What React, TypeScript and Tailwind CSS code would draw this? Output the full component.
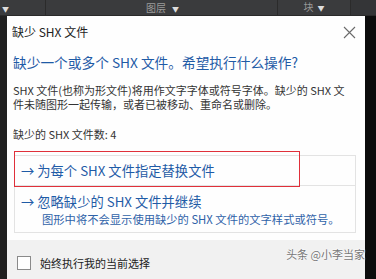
import React from "react";

const F = { fontFamily: '"Noto Sans CJK SC", "Noto Sans", sans-serif' };

export default function App() {
  return (
    <div className="w-[376px] h-[279px] overflow-hidden bg-[#141414] flex flex-col" style={F}>
      {/* top toolbar strip */}
      <div className="h-[16px] bg-[#3a3b3d] flex items-end text-[10px] text-[#9a9a9a] leading-none border-b border-[#2a2a2a]">
        <div className="w-[46px] h-full flex items-end pb-[2px] pl-[2px] border-r border-[#2b2b2b]">
          <span className="text-[7px] text-[#ddd]">▼</span>
        </div>
        <div className="w-[232px] h-full flex items-end justify-end pb-[2px] pr-[98px] border-r border-[#2b2b2b]">
          <span>图层</span>
          <span className="text-[7px] ml-[6px] text-[#ddd]">▼</span>
        </div>
        <div className="w-[73px] h-full flex items-end justify-center pb-[3px] border-r border-[#2b2b2b]">
          <span>块</span>
          <span className="text-[7px] ml-[4px] text-[#ddd]">▼</span>
        </div>
        <div className="flex-1 h-full bg-[#343537]" />
      </div>

      <div className="flex flex-1">
        <div className="w-[7px] bg-[#202020]" />
        <div className="w-[358px] bg-[#fefefe] flex flex-col">
          {/* title bar */}
          <div className="h-[30px] flex items-center justify-between pl-[5px] pr-[9px] pt-[1px]">
            <span className="text-[12px] leading-none text-[#222]">缺少 SHX 文件</span>
            <svg width="13" height="13" viewBox="0 0 13 13" className="mt-[1px]">
              <path d="M1 1L12 12M12 1L1 12" stroke="#6a6a6a" strokeWidth="1.1" fill="none" />
            </svg>
          </div>
          {/* content */}
          <div className="pl-[6px] pr-[6px]">
            <div className="mt-[6px] text-[13.7px] leading-[20px] text-[#1f5ba6] whitespace-nowrap">
              缺少一个或多个 SHX 文件。希望执行什么操作?
            </div>
            <div className="mt-[11px] text-[11px] leading-[14px] text-[#333] whitespace-nowrap">
              <div className="h-[14px]">SHX 文件(也称为形文件)将用作文字字体或符号字体。缺少的 SHX 文</div>
              <div className="h-[14px]">件未随图形一起传输，或者已被移动、重命名或删除。</div>
            </div>
            <div className="mt-[16px] text-[11px] leading-[14px] text-[#333]">缺少的 SHX 文件数: 4</div>

            <div className="relative mt-[14px] ml-[1px] w-[342px] border border-[#e3e3e3]">
              <div className="h-[30px] flex items-center pl-[6px] border-b border-[#e3e3e3] text-[13.3px] leading-none text-[#1f5ba6] whitespace-nowrap">
                → 为每个 SHX 文件指定替换文件
              </div>
              <div className="h-[46px] pl-[6px] pt-[6px]">
                <div className="text-[13.3px] leading-[20px] text-[#1f5ba6] whitespace-nowrap">→ 忽略缺少的 SHX 文件并继续</div>
                <div className="pl-[21px] text-[11.3px] leading-[14px] text-[#2f62a8] whitespace-nowrap">
                  图形中将不会显示使用缺少的 SHX 文件的文字样式或符号。
                </div>
              </div>
              {/* red annotation */}
              <div className="absolute left-[-1px] top-[-5px] w-[286px] h-[36px] border-[1.5px] border-[#e0303a]" />
            </div>
          </div>
          {/* footer */}
          <div className="mt-[7px] flex-1 bg-[#f1f1f1] relative">
            <div className="flex items-center pl-[10px] pt-[16px]">
              <div className="w-[14px] h-[14px] border border-[#8a8a8a] bg-white" />
              <span className="ml-[9px] text-[11px] leading-none text-[#222]">始终执行我的当前选择</span>
            </div>
            <div
              className="absolute right-[0px] top-[9px] text-[11px] leading-none text-[#777] whitespace-nowrap"
              style={{ textShadow: "0 0 2px #fff, 0 0 2px #fff" }}
            >
              头条 @小李当家
            </div>
          </div>
        </div>
        <div className="flex-1 bg-[#0c0c0c]" />
      </div>
    </div>
  );
}
